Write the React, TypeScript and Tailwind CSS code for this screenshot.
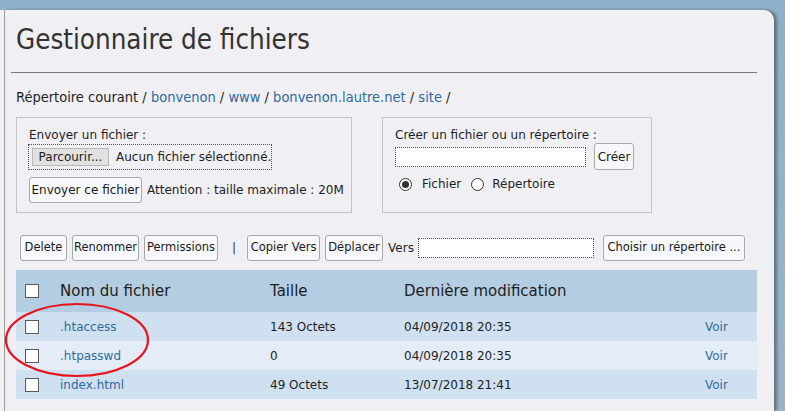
import React from "react";

const files = [
  { name: ".htaccess", size: "143 Octets", date: "04/09/2018 20:35" },
  { name: ".htpasswd", size: "0", date: "04/09/2018 20:35" },
  { name: "index.html", size: "49 Octets", date: "13/07/2018 21:41" },
];

function Btn({ children, className = "" }: { children: React.ReactNode; className?: string }) {
  return (
    <button
      className={
        "flex shrink-0 items-center justify-center h-[26px] px-[2px] whitespace-nowrap rounded-[3px] border border-[#a9a9a9] bg-[#f6f8fb] text-[11.5px] text-[#1a1a1a] leading-none " +
        className
      }
    >
      {children}
    </button>
  );
}

function Checkbox() {
  return <span className="block w-[14px] h-[14px] bg-white border border-[#5a5a5a]" />;
}

function Radio({ checked }: { checked?: boolean }) {
  return (
    <span className="flex items-center justify-center w-[13px] h-[13px] rounded-full border border-[#333] bg-white">
      {checked && <span className="block w-[7px] h-[7px] rounded-full bg-[#333]" />}
    </span>
  );
}

export default function App() {
  return (
    <div className="relative w-[785px] h-[411px] overflow-hidden bg-gradient-to-b from-[#8fb0c8] to-[#9ab4c6] font-['DejaVu_Sans',sans-serif] text-[#1e1e1e]">
      <div className="flex h-full pt-[10px]">
        <div className="w-[4px] bg-[#f2f2f2]" />
        <div className="flex-1 mr-[11px] bg-[#f0eff4] border-l border-[#9a9a9a] rounded-tr-[10px] shadow-[3px_0_3px_rgba(0,0,0,0.35)] pl-[11px] pr-[17px]">
          <h1 className="mt-[13px] text-[27.5px] leading-[32px] text-[#333] font-['DejaVu_Sans_Condensed',sans-serif] font-normal">
            Gestionnaire de fichiers
          </h1>
          <hr className="mt-[17px] -ml-[5px] border-0 border-t border-[#7a7a7a]" />
          <div className="mt-[15px] text-[14.5px] leading-[18px] whitespace-nowrap font-['DejaVu_Sans_Condensed',sans-serif]">
            Répertoire courant / <a className="text-[#2f6a9f]">bonvenon</a> /{" "}
            <a className="text-[#2f6a9f]">www</a> / <a className="text-[#2f6a9f]">bonvenon.lautre.net</a> /{" "}
            <a className="text-[#2f6a9f]">site</a> /
          </div>

          <div className="flex gap-[30px] mt-[11px] text-[12px]">
            <div className="w-[336px] h-[96px] border border-[#c2c2c2] pl-[12px] pt-[10px]">
              <div className="leading-[15px]">Envoyer un fichier :</div>
              <div className="flex items-center w-[244px] h-[26px] -ml-[1px] mt-[1px] border border-dotted border-[#555] pl-[3px] gap-[7px] whitespace-nowrap">
                <span className="flex shrink-0 items-center justify-center w-[77px] h-[18px] bg-[#e1e1e1] border border-[#b8b8b8]">
                  Parcourir...
                </span>
                <span>Aucun fichier sélectionné.</span>
              </div>
              <div className="flex items-center gap-[5px] mt-[7px] whitespace-nowrap">
                <Btn className="w-[113px] text-[12px]">Envoyer ce fichier</Btn>
                <span>Attention : taille maximale : 20M</span>
              </div>
            </div>
            <div className="w-[270px] h-[96px] border border-[#c2c2c2] pl-[12px] pt-[10px]">
              <div className="leading-[15px] whitespace-nowrap">Créer un fichier ou un répertoire :</div>
              <div className="flex items-center gap-[8px]">
                <span className="block w-[191px] h-[20px] bg-white border border-dotted border-[#555]" />
                <Btn className="w-[40px] h-[27px] text-[12px]">Créer</Btn>
              </div>
              <div className="flex items-center mt-[5px] ml-[4px]">
                <Radio checked />
                <span className="ml-[10px]">Fichier</span>
                <span className="ml-[10px]">
                  <Radio />
                </span>
                <span className="ml-[8px]">Répertoire</span>
              </div>
            </div>
          </div>

          <div className="flex items-center mt-[22px] ml-[4px] text-[12px] whitespace-nowrap">
            <Btn className="w-[47px]">Delete</Btn>
            <Btn className="w-[67px] ml-[5px]">Renommer</Btn>
            <Btn className="w-[74px] ml-[5px]">Permissions</Btn>
            <span className="ml-[14px] mr-[11px] text-[#333]">|</span>
            <Btn className="w-[73px]">Copier Vers</Btn>
            <Btn className="w-[58px] ml-[5px]">Déplacer</Btn>
            <span className="ml-[5px]">Vers</span>
            <span className="block shrink-0 ml-[4px] w-[176px] h-[20px] bg-white border border-dotted border-[#555]" />
            <Btn className="w-[142px] ml-[9px]">Choisir un répertoire ...</Btn>
          </div>

          <div className="mt-[9px]">
            <div className="flex items-center h-[42px] bg-[#b3cde2] text-[15px]">
              <span className="ml-[9px]">
                <Checkbox />
              </span>
              <span className="ml-[21px] w-[210px]">Nom du fichier</span>
              <span className="w-[134px]">Taille</span>
              <span>Dernière modification</span>
            </div>
            {files.map((f, i) => (
              <div
                key={f.name}
                className={
                  "flex items-center h-[29px] text-[12px] " + (i === 1 ? "bg-[#e4edf7]" : "bg-[#cfe1f0]")
                }
              >
                <span className="ml-[9px]">
                  <Checkbox />
                </span>
                <span className="ml-[21px] w-[210px] text-[#2f6a9f]">{f.name}</span>
                <span className="w-[134px]">{f.size}</span>
                <span className="w-[301px]">{f.date}</span>
                <span className="text-[#2f6a9f]">Voir</span>
              </div>
            ))}
          </div>
        </div>
      </div>

      <svg className="absolute left-[4px] top-[302px]" width="146" height="76" viewBox="0 0 146 76">
        <ellipse cx="73" cy="38" rx="71" ry="36" fill="none" stroke="#e8131b" strokeWidth="2.2" />
      </svg>
    </div>
  );
}
